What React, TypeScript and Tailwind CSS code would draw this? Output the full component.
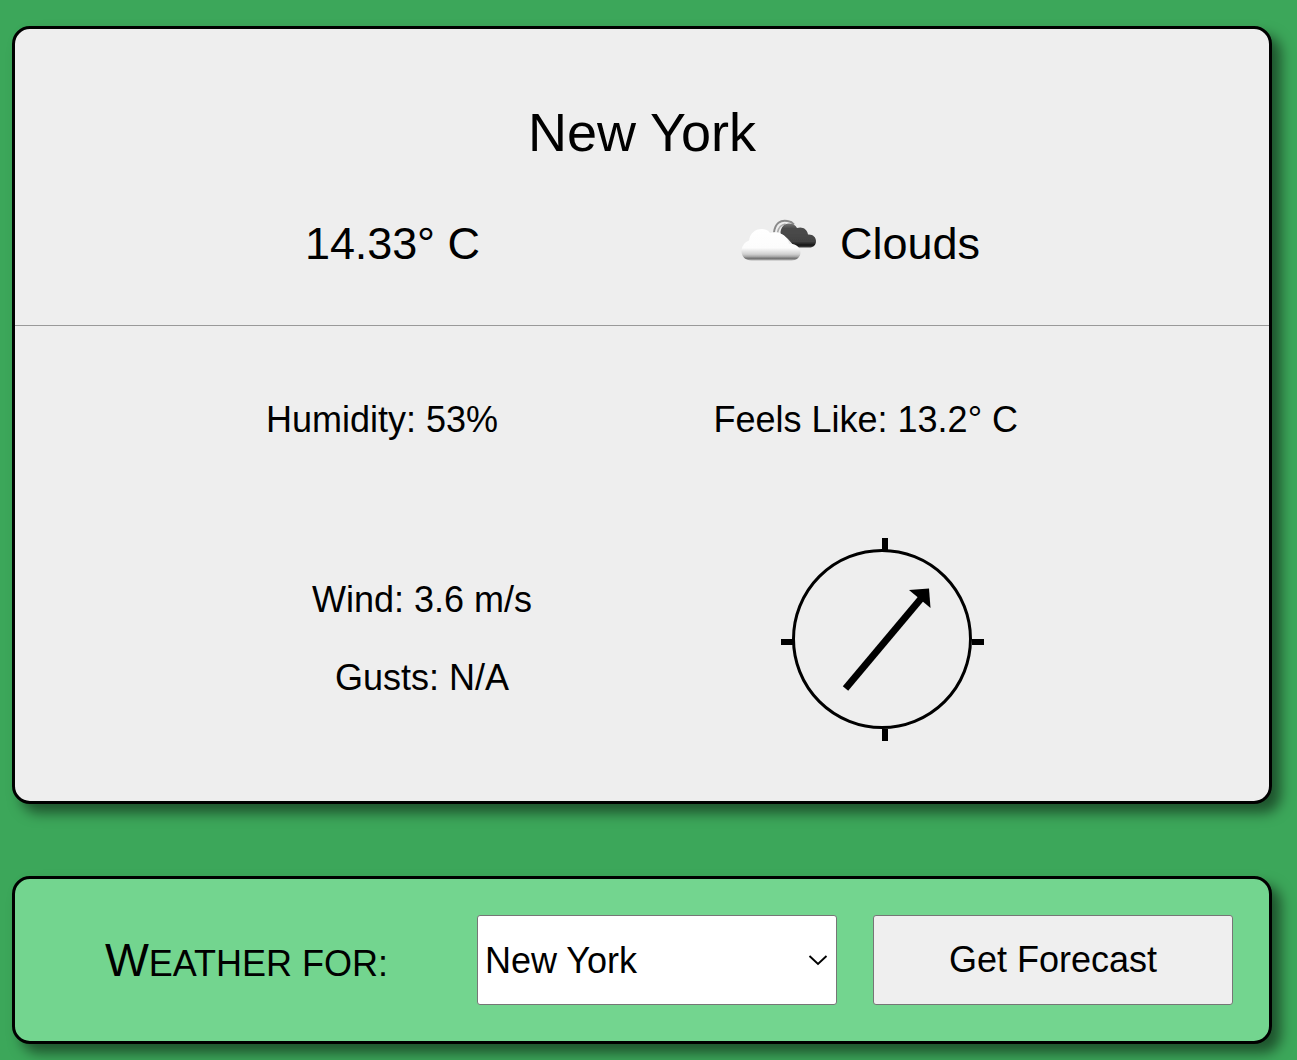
import { useState } from "react";

function CloudIcon() {
  return (
    <svg width="90" height="60" viewBox="0 0 90 60" className="shrink-0">
      <defs>
        <linearGradient id="front" x1="0" y1="0" x2="0" y2="1">
          <stop offset="0" stopColor="#ffffff" />
          <stop offset="0.6" stopColor="#fcfcfc" />
          <stop offset="0.8" stopColor="#d0d0d0" />
          <stop offset="0.88" stopColor="#a5a5a5" />
          <stop offset="0.93" stopColor="#707070" />
          <stop offset="1" stopColor="#b5b5b5" />
        </linearGradient>
        <linearGradient id="back" x1="0" y1="0" x2="0" y2="1">
          <stop offset="0" stopColor="#777777" />
          <stop offset="0.2" stopColor="#4c4c4c" />
          <stop offset="0.75" stopColor="#424242" />
          <stop offset="0.9" stopColor="#161616" />
          <stop offset="1" stopColor="#444444" />
        </linearGradient>
        <filter id="soft" x="-10%" y="-10%" width="120%" height="120%">
          <feGaussianBlur stdDeviation="0.7" />
        </filter>
      </defs>
      <g filter="url(#soft)" transform="translate(-0.500 -4.500)">
        <path d="M40.500 23C41.500 14 47 10 54 11.500C57 12 59 13 60.500 15" fill="none" stroke="#8a8a8a" strokeWidth="2" />
        <path d="M44 23C45 18 48 15 52 14.500" fill="none" stroke="#aaaaaa" strokeWidth="1.500" />
        <path d="M47 24C47 18 50.500 14 55.500 14C59.500 14 62 15.500 63.500 18.500C68.500 16.500 74 19.500 74.500 25C79 24.500 82.500 27.500 82.500 31.500C82.500 35.500 80 38 76 38H62L54 29Z" fill="url(#back)" />
        <path d="M15.500 31C16.500 24 21.500 19.500 28 19.500C32 19.500 34.500 20.500 36.500 23.500C45 20.500 54.500 26 55.500 34.500C61 33.500 67 37.500 67 43C67 47.500 63 51 58 51H18C12 51 8 47 8 42C8 37 11 32.500 15.500 31Z" fill="url(#front)" />
      </g>
    </svg>
  );
}

function Compass() {
  return (
    <svg width="204" height="204" viewBox="0 0 204 204" className="shrink-0">
      <circle cx="101" cy="101" r="88.500" fill="none" stroke="#000" strokeWidth="3" />
      <path d="M101 0h6v12h-6zM101 191h6v12h-6zM0 101h12v6h-12zM191 101h12v6h-12z" />
      <path d="M64.500 150.500L140.500 60" fill="none" stroke="#000" strokeWidth="7" />
      <path d="M128 52L148 50.500L149.500 70Z" />
    </svg>
  );
}

export default function App() {
  const [city, setCity] = useState("New York");
  return (
    <div className="h-[1060px] overflow-hidden bg-[#3ca75a] px-3 pt-[26px] font-['Liberation_Sans',Arial,sans-serif] text-[36px] leading-[42px] text-black">
      <main className="h-[778px] w-[1260px] rounded-[18px] border-3 border-black bg-[#eeeeee] shadow-[9px_9px_13px_rgba(0,0,0,0.5)]">
        <section className="h-[297px] border-b border-[#999999] pt-[72px]">
          <h1 className="text-center text-[54px] leading-[62px]">New York</h1>
          <div className="mt-[51px] flex h-[60px] items-center text-[45px] leading-[52px]">
            <p className="ml-[290px] w-[174px] tracking-[-0.1px] whitespace-nowrap">14.33° C</p>
            <div className="ml-[255px] flex items-center gap-[16px]">
              <CloudIcon />
              <p>Clouds</p>
            </div>
          </div>
        </section>
        <section>
          <div className="flex pt-[73px] whitespace-nowrap">
            <p className="ml-[251px] w-[231px]">Humidity: 53%</p>
            <p className="ml-[216.500px]">Feels Like: 13.2° C</p>
          </div>
          <div className="mt-[97px] flex items-center">
            <div className="ml-[290px] flex w-[234px] flex-col items-center gap-9 pb-[2px]">
              <p>Wind: 3.6 m/s</p>
              <p>Gusts: N/A</p>
            </div>
            <div className="ml-[242px]">
              <Compass />
            </div>
          </div>
        </section>
      </main>
      <form
        onSubmit={(e) => e.preventDefault()}
        className="mt-[72px] flex h-[168px] w-[1260px] items-center rounded-[18px] border-3 border-black bg-[#73d58f] px-9 shadow-[9px_9px_13px_rgba(0,0,0,0.5)]"
      >
        <label htmlFor="city" className="w-[391px] pt-[3px] text-center whitespace-nowrap">
          <span className="text-[46.5px]">W</span>EATHER FOR:
        </label>
        <div className="relative ml-[35px] h-[90px] w-[360px]">
          <select
            id="city"
            value={city}
            onChange={(e) => setCity(e.target.value)}
            className="h-full w-full appearance-none rounded-[3px] border border-[#767676] bg-white pt-[2px] pl-[7px]"
          >
            <option>New York</option>
            <option>London</option>
            <option>Tokyo</option>
          </select>
          <svg className="pointer-events-none absolute top-[40px] right-[9px]" width="20" height="12" viewBox="0 0 20 12">
            <path d="M1.500 1L10 9L18.500 1" fill="none" stroke="#000" strokeWidth="1.900" />
          </svg>
        </div>
        <button className="ml-9 h-[90px] w-[360px] rounded-[3px] border border-[#767676] bg-[#efefef]">Get Forecast</button>
      </form>
    </div>
  );
}
